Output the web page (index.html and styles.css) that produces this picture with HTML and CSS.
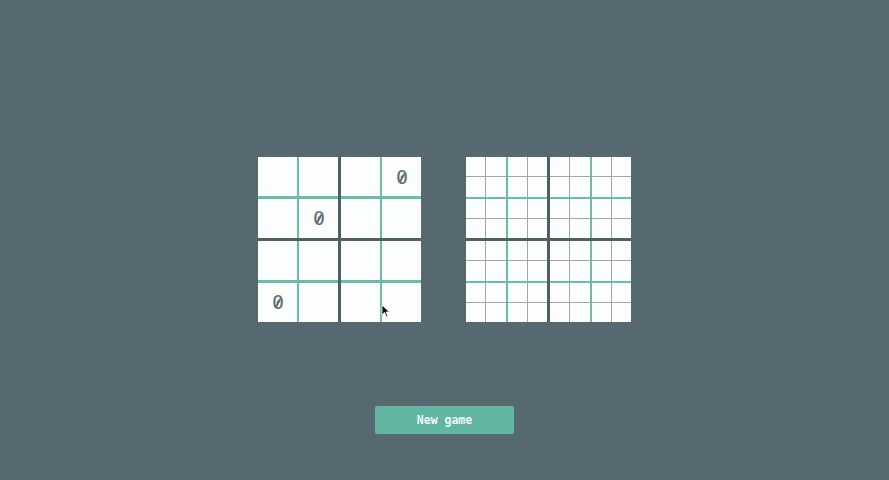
FILE: index.html
```
<!DOCTYPE html>
<html>
<head>
<meta charset="utf-8">
<link rel="stylesheet" href="styles.css">
</head>
<body>
<main class="page">
  <section class="boards">
    <div class="board big">
      <div class="box"><div class="c"></div><div class="c"></div><div class="c"></div><div class="c"><span class="zero">0</span></div></div>
      <div class="box"><div class="c"></div><div class="c"><span class="zero">0</span></div><div class="c"></div><div class="c"></div></div>
      <div class="box"><div class="c"></div><div class="c"></div><div class="c"><span class="zero">0</span></div><div class="c"></div></div>
      <div class="box"><div class="c"></div><div class="c"></div><div class="c"></div><div class="c"></div></div>
    </div>
    <div class="board small" id="small"></div>
  </section>
  <button class="btn">New game</button>
</main>
<svg class="cursor" width="10" height="14" viewBox="0 0 10 14"><path d="M1 1 L1 11 L3.5 8.5 L5.5 13 L7 12.3 L5 8 L8.5 8 Z" fill="#111" stroke="#fff" stroke-width="0.8"/></svg>
<script src="app.js"></script>
</body>
</html>
```
FILE: styles.css
```
html, body {
  margin: 0;
  padding: 0;
  background: #566970;
  height: 480px;
  overflow: hidden;
}
.page {
  display: flex;
  flex-direction: column;
  align-items: center;
  padding-top: 157px;
}
.boards {
  display: flex;
  gap: 45px;
}
.board {
  display: grid;
  grid-template-columns: 1fr 1fr;
  gap: 3px;
  background: #4e5f66;
}
.box {
  display: grid;
  grid-template-columns: 1fr 1fr;
  gap: 2px;
  background: #6dbca8;
}
.big .c {
  width: 39px;
  height: 39px;
  background: #fcfefd;
  display: flex;
  align-items: center;
  justify-content: center;
  font-family: "DejaVu Sans Mono", monospace;
  font-size: 20px;
  color: #5d6e75;
}
.zero {
  position: relative;
  display: inline-block;
  line-height: 1;
  margin-left: 1px;
}
.zero::after {
  content: "";
  position: absolute;
  left: 50%;
  top: 50%;
  width: 1.6px;
  height: 10px;
  margin-left: -0.8px;
  margin-top: -4px;
  background: #5d6e75;
  transform: rotate(28deg);
}
.sub {
  display: grid;
  grid-template-columns: 1fr 1fr;
  gap: 1px;
  background: #9ea6a9;
}
.small .c {
  width: 19.25px;
  height: 19.25px;
  background: #fcfefd;
}
.btn {
  margin-top: 84px;
  width: 139px;
  height: 28px;
  border: none;
  border-radius: 2px;
  background: #62b6a1;
  color: #eef8f4;
  font-family: "DejaVu Sans Mono", monospace;
  font-size: 11.5px;
  font-weight: 600;
  padding: 0;
}
.cursor {
  position: absolute;
  left: 381px;
  top: 304px;
}
```
FILE: app.js
```
const small = document.getElementById('small');
for (let b = 0; b < 4; b++) {
  const box = document.createElement('div');
  box.className = 'box';
  for (let s = 0; s < 4; s++) {
    const sub = document.createElement('div');
    sub.className = 'sub';
    for (let c = 0; c < 4; c++) {
      const cell = document.createElement('div');
      cell.className = 'c';
      sub.appendChild(cell);
    }
    box.appendChild(sub);
  }
  small.appendChild(box);
}
```
